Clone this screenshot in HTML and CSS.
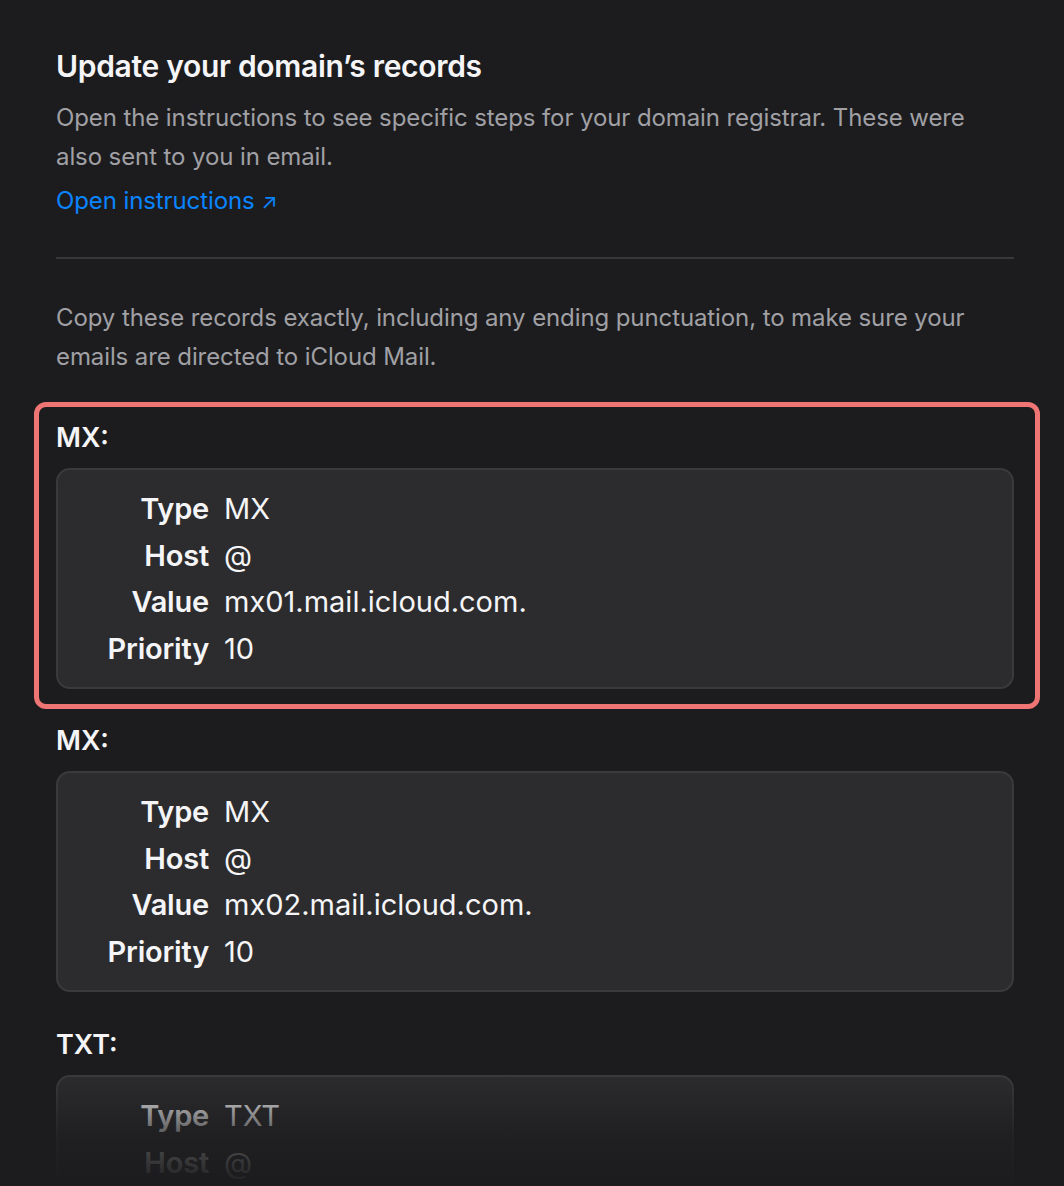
FILE: index.html
```html
<!DOCTYPE html>
<html lang="en">
<head>
  <meta charset="UTF-8" />
  <meta name="viewport" content="width=device-width, initial-scale=1" />
  <title>Update your domain's records</title>
  <link rel="stylesheet" href="styles.css">
</head>
<body>
  <div class="page">
    <h2>Update your domain’s records</h2>
    <p class="note">Open the instructions to see specific steps for your domain registrar. These were also sent to you in email.</p>
    <a class="link" href="#">Open instructions <span class="arrow">↗</span></a>

    <hr class="divider" />

    <p class="note">Copy these records exactly, including any ending punctuation, to make sure your emails are directed to iCloud Mail.</p>

    <div class="record highlight">
      <h3>MX:</h3>
      <div class="card">
        <div class="label">Type</div><div class="value">MX</div>
        <div class="label">Host</div><div class="value">@</div>
        <div class="label">Value</div><div class="value">mx01.mail.icloud.com.</div>
        <div class="label">Priority</div><div class="value">10</div>
      </div>
    </div>

    <div class="record">
      <h3>MX:</h3>
      <div class="card">
        <div class="label">Type</div><div class="value">MX</div>
        <div class="label">Host</div><div class="value">@</div>
        <div class="label">Value</div><div class="value">mx02.mail.icloud.com.</div>
        <div class="label">Priority</div><div class="value">10</div>
      </div>
    </div>

    <div class="record">
      <h3>TXT:</h3>
      <div class="card">
        <div class="label">Type</div><div class="value">TXT</div>
        <div class="label">Host</div><div class="value">@</div>
        <div class="label">Value</div><div class="value">apple-domain=</div>
      </div>
    </div>
  </div>
  <div class="fade"></div>
</body>
</html>
```

FILE: styles.css
```css
* {
  box-sizing: border-box;
}

html,
body {
  height: 100%;
  overflow: hidden;
}

body {
  margin: 0;
  font-family: Inter, "Noto Sans", sans-serif;
  background-color: #1c1c1e;
  color: #f5f5f7;
}

.page {
  padding: 48px 50px 0 56px;
}

h2 {
  margin: 0;
  font-size: 30px;
  font-weight: 600;
  line-height: 36px;
  letter-spacing: -0.3px;
}

.note {
  margin: 14px 0 0;
  font-size: 24px;
  line-height: 39px;
  color: #a0a0a5;
  letter-spacing: -0.1px;
}

.link {
  display: inline-block;
  margin-top: 5px;
  font-size: 24px;
  line-height: 39px;
  color: #0a84ff;
  text-decoration: none;
  letter-spacing: -0.1px;
}

.link .arrow {
  font-size: 21px;
}

.divider {
  margin: 36px 0 39px;
  border: 0;
  border-top: 2px solid #38383a;
}

.record {
  margin-top: 37px;
}

.record h3 {
  margin: 0;
  font-size: 27px;
  font-weight: 600;
  line-height: 32px;
}

.highlight {
  margin: 26px -26px 0 -22px;
  padding: 15px 21px 15px 17px;
  border: 5px solid #ef7575;
  border-radius: 12px;
}

.highlight + .record {
  margin-top: 16px;
}

.card {
  margin-top: 14px;
  padding: 16px 20px 15px 0;
  display: grid;
  grid-template-columns: 151px 1fr;
  column-gap: 15px;
  background: #2c2c2e;
  border: 2px solid #3a3a3c;
  border-radius: 14px;
}

.label,
.value {
  font-size: 29px;
  line-height: 46.5px;
}

.label {
  text-align: right;
  font-weight: 600;
  letter-spacing: -0.2px;
}

.value {
  font-weight: 400;
}

.fade {
  position: fixed;
  left: 0;
  right: 0;
  bottom: 0;
  height: 110px;
  background: linear-gradient(to bottom, rgba(28, 28, 30, 0) 0%, rgba(28, 28, 30, 0.75) 55%, #1c1c1e 100%);
  pointer-events: none;
}
```
